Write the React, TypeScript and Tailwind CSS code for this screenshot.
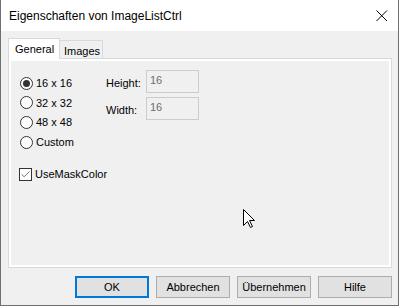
import { Check } from 'lucide-react'

const radios = ['16 x 16', '32 x 32', '48 x 48', 'Custom']

const Radio = ({ label, checked }: { label: string; checked?: boolean }) => (
  <div className="flex items-center h-[19.67px]">
    <div className="w-[13px] h-[13px] rounded-full border border-[#333333] bg-white flex items-center justify-center">
      {checked && <div className="w-[7px] h-[7px] rounded-full bg-[#333333]" />}
    </div>
    <span className="ml-[3px]">{label}</span>
  </div>
)

const Field = ({ label }: { label: string }) => (
  <div className="flex items-center">
    <span className="w-[40px] mt-[3px]">{label}</span>
    <div className="w-[53px] h-[23px] border border-[#cccccc] bg-[#f0f0f0] pl-[3px] pt-[3px] text-[#6d6d6d] leading-[13px]">16</div>
  </div>
)

const Btn = ({ label, primary }: { label: string; primary?: boolean }) => (
  <button
    className={`w-[74px] h-[22px] bg-[#e1e1e1] flex items-center justify-center text-black ${primary ? 'border-2 border-[#0078d7]' : 'border border-[#adadad]'}`}
  >
    {label}
  </button>
)

export default function App() {
  return (
    <div className="relative w-[399px] h-[306px] flex flex-col border-x border-b border-[#707070] bg-[#f0f0f0] text-[11px] text-black" style={{ fontFamily: '"Liberation Sans", Arial, sans-serif' }}>
      {/* Titelleiste */}
      <div className="h-[31px] bg-white flex items-center justify-between pl-[8px] pr-[9px]">
        <span className="text-[12px] text-black">Eigenschaften von ImageListCtrl</span>
        <svg width="12" height="12" viewBox="0 0 12 12" className="mr-[1px]">
          <path d="M0.5 0.5 L11 11 M11 0.5 L0.5 11" stroke="#000" strokeWidth="1" fill="none" />
        </svg>
      </div>

      <div className="pl-[7px] pt-[7px]">
        {/* Tabs */}
        <div className="flex items-end h-[20px]">
          <div className="relative z-10 h-[21px] -mb-px w-[52px] bg-white border border-b-0 border-[#d9d9d9] pl-[6px] pt-[2px]">General</div>
          <div className="h-[18px] w-[43px] border border-b-0 border-l-0 border-[#d9d9d9] bg-[#f0f0f0] pl-[4px] pt-[2px]">Images</div>
        </div>

        {/* Panel */}
        <div className="w-[384px] h-[210px] border border-[#d9d9d9] bg-white p-[2px]">
          <div className="h-full bg-[#f0f0f0] pl-[9px]">
            <div className="flex">
              <div className="w-[86px] pt-[12.5px]">
                {radios.map((r, i) => (
                  <Radio key={r} label={r} checked={i === 0} />
                ))}
              </div>
              <div className="pt-[9px] flex flex-col gap-[4px]">
                <Field label="Height:" />
                <Field label="Width:" />
              </div>
            </div>
            <div className="flex items-center mt-[14px] -ml-[1px]">
              <div className="w-[13px] h-[13px] border border-[#333333] bg-white flex items-center justify-center">
                <Check size={11} strokeWidth={1.5} color="#333333" />
              </div>
              <span className="ml-[3px]">UseMaskColor</span>
            </div>
          </div>
        </div>
      </div>

      {/* Buttons */}
      <div className="flex justify-end gap-[7px] pr-[6px] mt-[8px]">
        <Btn label="OK" primary />
        <Btn label="Abbrechen" />
        <Btn label="Übernehmen" />
        <Btn label="Hilfe" />
      </div>

      {/* Mauszeiger */}
      <svg className="absolute left-[242px] top-[209px]" width="13" height="20" viewBox="0 0 13 20">
        <path d="M0.5 0.5 L0.5 16.5 L4.5 12.5 L7.5 18.5 L9.5 17.5 L6.5 11.5 L11.5 11.5 Z" fill="#fff" stroke="#000" strokeWidth="1" strokeLinejoin="miter" />
      </svg>
    </div>
  )
}
